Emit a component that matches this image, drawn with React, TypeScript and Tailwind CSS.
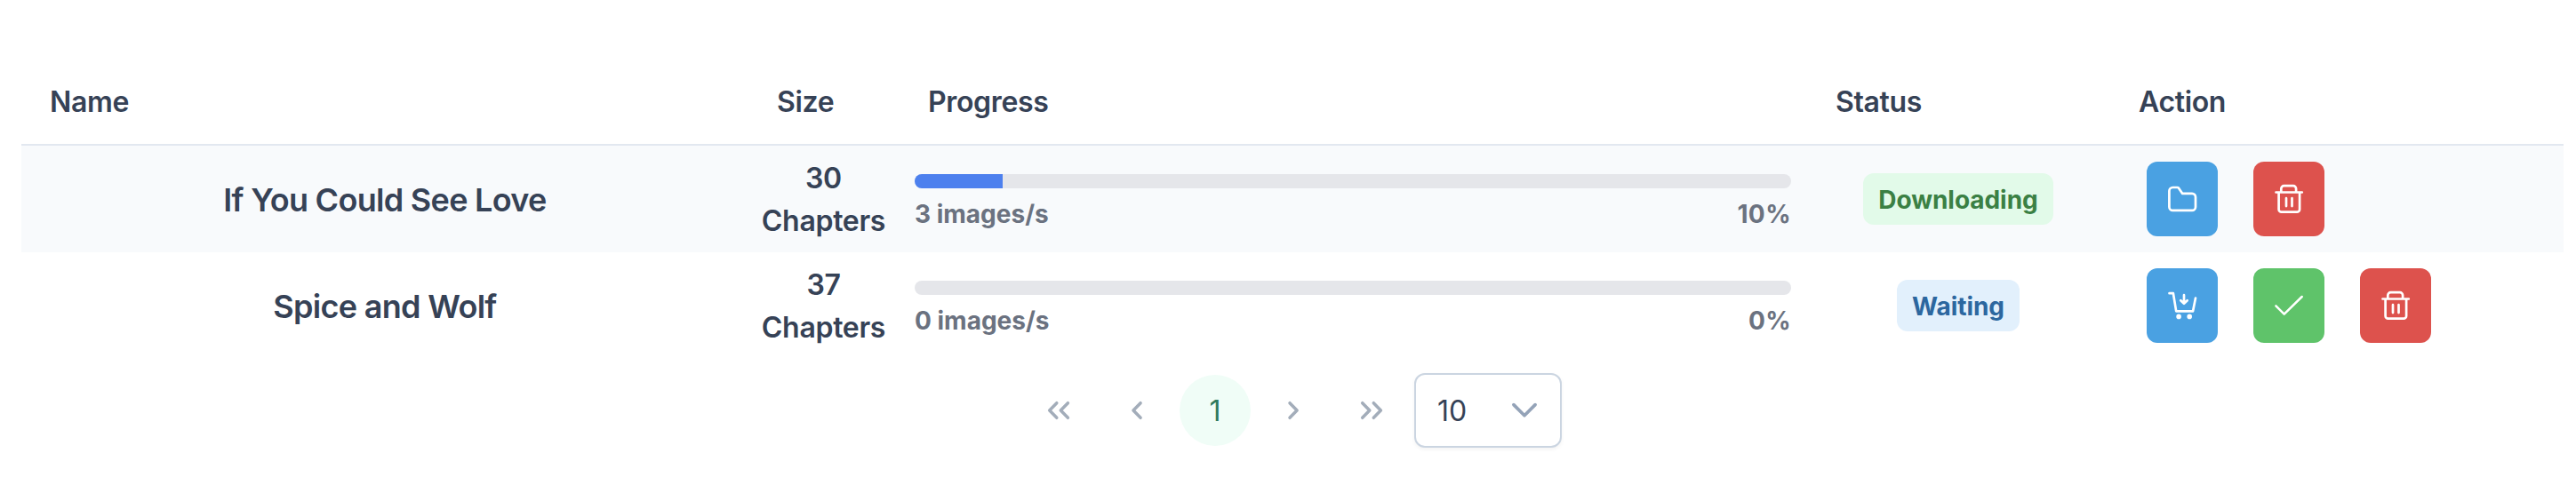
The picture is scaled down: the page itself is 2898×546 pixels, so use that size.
import type { ReactNode } from 'react';

type IconProps = { children: ReactNode; size?: number; stroke?: number };

function Icon({ children, size = 32, stroke = 2.7 }: IconProps) {
  return (
    <svg
      className="block shrink-0 overflow-visible"
      width={size}
      height={size}
      viewBox={`0 0 ${size} ${size}`}
      fill="none"
      stroke="currentColor"
      strokeWidth={stroke}
      strokeLinecap="round"
      strokeLinejoin="round"
    >
      {children}
    </svg>
  );
}

const FolderIcon = () => (
  <Icon>
    <path d="M1.4 24.9V7a4 4 0 0 1 4-4h5c.7 0 1.2.2 1.6.7L16.3 9.9H27a4 4 0 0 1 4 4v11a4 4 0 0 1-4 4H5.4a4 4 0 0 1-4-4Z" />
  </Icon>
);

const TrashIcon = () => (
  <Icon>
    <path d="M1.5 8.5H30.8M7.3 8.3V4.4A3.2 3.2 0 0 1 10.5 1.2h10.4a3.2 3.2 0 0 1 3.2 3.2v3.9M4.6 8.7v19a3 3 0 0 0 3 3h17.5a3 3 0 0 0 3-3v-19M13 15.2v8.9M19.5 15.2v8.9" />
  </Icon>
);

const CartIcon = () => (
  <Icon>
    <path d="M1.5 2.2H5.9L9.2 22.4H28L31 7.6M18 4.2V13.6M14.3 10.2 18 13.8 21.7 10.2" />
    <circle cx="12.1" cy="28.4" r="2.8" fill="currentColor" stroke="none" />
    <circle cx="24.2" cy="28.4" r="2.8" fill="currentColor" stroke="none" />
  </Icon>
);

const CheckIcon = () => (
  <Icon stroke={2.5}>
    <path d="M1.4 16.4 10.7 25.7 30.7 6" />
  </Icon>
);

type ActionKind = 'open' | 'queue' | 'confirm' | 'remove';

const actionStyles: Record<ActionKind, string> = {
  open: 'bg-[#4aa1e2]',
  queue: 'bg-[#4aa1e2]',
  confirm: 'bg-[#5fc36a]',
  remove: 'bg-[#dd524d]',
};

const actionIcons: Record<ActionKind, ReactNode> = {
  open: <FolderIcon />,
  queue: <CartIcon />,
  confirm: <CheckIcon />,
  remove: <TrashIcon />,
};

function ActionButton({ kind }: { kind: ActionKind }) {
  return (
    <button className={`flex h-[84px] w-20 items-center justify-center rounded-xl text-white ${actionStyles[kind]}`}>
      {actionIcons[kind]}
    </button>
  );
}

type Task = {
  name: string;
  chapters: number;
  speed: number;
  percent: number;
  status: string;
  badge: string;
  actions: ActionKind[];
};

const tasks: Task[] = [
  {
    name: 'If You Could See Love',
    chapters: 30,
    speed: 3,
    percent: 10,
    status: 'Downloading',
    badge: 'bg-[#e2fae9] text-[#3b8044]',
    actions: ['open', 'remove'],
  },
  {
    name: 'Spice and Wolf',
    chapters: 37,
    speed: 0,
    percent: 0,
    status: 'Waiting',
    badge: 'bg-[#e2f0fc] text-[#2c679f]',
    actions: ['queue', 'confirm', 'remove'],
  },
];

const columns = [
  { title: 'Name', padding: 'pl-8' },
  { title: 'Size', padding: 'pl-8' },
  { title: 'Progress', padding: 'pl-[31px]' },
  { title: 'Status', padding: 'pl-[34px]' },
  { title: 'Action', padding: 'pl-[31px]' },
];

function TaskRow({ task }: { task: Task }) {
  return (
    <tr className="h-[120px] odd:bg-[#f8fafc]">
      <td className="px-0 pt-0.5 pb-0 text-center text-[36px] leading-[56px] font-semibold tracking-[-0.7px]">
        {task.name}
      </td>
      <td className="pt-0.5 pr-0.5 pb-0 pl-0 text-center text-[32px] leading-[48px] font-semibold tracking-[-0.3px]">
        {task.chapters}
        <br />
        Chapters
      </td>
      <td className="px-4 pt-2 pb-0">
        <div className="h-4 overflow-hidden rounded-full bg-[#e5e6ea]">
          <div className="h-full bg-[#4d80ee]" style={{ width: `${task.percent}%` }} />
        </div>
        <div className="mt-[9px] flex h-[39px] justify-between text-[28px] leading-10 font-bold text-[#6b7280]">
          <span>{task.speed} images/s</span>
          <span className="tracking-[0.4px]">{task.percent}%</span>
        </div>
      </td>
      <td className="p-0 text-center">
        <span
          className={`inline-flex h-[58px] items-center rounded-xl px-[17px] pt-px align-middle text-[28px] font-bold tracking-[-0.05px] ${task.badge}`}
        >
          {task.status}
        </span>
      </td>
      <td className="py-0 pr-0 pl-10">
        <div className="flex gap-10">
          {task.actions.map((kind) => (
            <ActionButton key={kind} kind={kind} />
          ))}
        </div>
      </td>
    </tr>
  );
}

function PageButton({ children }: { children: ReactNode }) {
  return <button className="flex size-20 items-center justify-center rounded-full text-[#a3adba]">{children}</button>;
}

function Paginator() {
  return (
    <nav className="mt-4 flex items-center justify-center gap-2">
      <PageButton>
        <Icon size={28} stroke={3.5}>
          <path d="M11.8 5.7 3.7 14 11.8 22.3M24.4 5.7 16.3 14 24.4 22.3" />
        </Icon>
      </PageButton>
      <PageButton>
        <Icon size={28} stroke={3.5}>
          <path d="M18.1 5.7 10 14 18.1 22.3" />
        </Icon>
      </PageButton>
      <button className="size-20 rounded-full bg-[#f0fdf7] pt-0.5 text-[32px] text-[#2f7a5c]">1</button>
      <PageButton>
        <Icon size={28} stroke={3.5}>
          <path d="M10 5.7 18.1 14 10 22.3" />
        </Icon>
      </PageButton>
      <PageButton>
        <Icon size={28} stroke={3.5}>
          <path d="M3.7 5.7 11.8 14 3.7 22.3M16.3 5.7 24.4 14 16.3 22.3" />
        </Icon>
      </PageButton>
      <button className="flex h-[84px] w-[166px] items-center justify-between rounded-xl border-2 border-[#cbd5e1] bg-white pr-[26px] pl-6 text-[32px] shadow-[0_2px_4px_rgba(18,18,23,0.05)]">
        <span className="pt-0.5">10</span>
        <span className="text-[#94a3b8]">
          <Icon size={28} stroke={3.7}>
            <path d="M1.9 7.6 14 19.8 26.1 7.6" />
          </Icon>
        </span>
      </button>
    </nav>
  );
}

export default function App() {
  return (
    <main className="h-[546px] bg-white pt-[66px] pr-[14px] pl-6 font-['Inter',sans-serif] text-[#364256]">
      <table className="w-full table-fixed border-separate border-spacing-0">
        <colgroup>
          <col className="w-[818px]" />
          <col className="w-[171px]" />
          <col className="w-[1018px]" />
          <col className="w-[344px]" />
          <col />
        </colgroup>
        <thead>
          <tr>
            {columns.map(({ title, padding }) => (
              <th
                key={title}
                className={`h-[98px] border-b-2 border-[#e2e8f0] pt-0.5 pr-0 pb-0 text-left text-[32px] leading-[48px] font-semibold tracking-[-0.35px] ${padding}`}
              >
                {title}
              </th>
            ))}
          </tr>
        </thead>
        <tbody>
          {tasks.map((task) => (
            <TaskRow key={task.name} task={task} />
          ))}
        </tbody>
      </table>
      <Paginator />
    </main>
  );
}
